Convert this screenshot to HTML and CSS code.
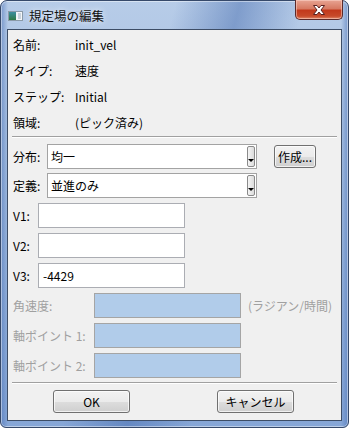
FILE: index.html
```html
<!DOCTYPE html>
<html lang="ja">
<head>
<meta charset="utf-8">
<title>規定場の編集</title>
<link rel="stylesheet" href="styles.css">
</head>
<body>
<div class="window">
  <div class="titlebar">
    <svg class="app-icon" width="15" height="10" viewBox="0 0 15 10">
      <defs>
        <linearGradient id="ig" x1="0" y1="0" x2="0" y2="1">
          <stop offset="0" stop-color="#3d8fa0"/>
          <stop offset="1" stop-color="#2f7a45"/>
        </linearGradient>
      </defs>
      <rect x="0.5" y="0.5" width="14" height="9" fill="#f4f6f8" stroke="#8a9aa8"/>
      <rect x="1" y="1" width="7" height="8" fill="url(#ig)"/>
      <rect x="10" y="2" width="3" height="6" fill="#c9d3dc"/>
    </svg>
    <span class="title">規定場の編集</span>
    <div class="close">
      <svg width="16" height="12" viewBox="0 0 16 12">
        <path d="M2.5 1.5 L6 1.5 L8 4 L10 1.5 L13.5 1.5 L10 6 L13.5 10.5 L10 10.5 L8 8 L6 10.5 L2.5 10.5 L6 6 Z" fill="#ffffff" stroke="#5a2020" stroke-width="1" stroke-linejoin="round"/>
      </svg>
    </div>
  </div>
  <div class="client">
    <div class="info">
      <div class="info-row"><span class="info-label">名前:</span><span>init_vel</span></div>
      <div class="info-row"><span class="info-label">タイプ:</span><span>速度</span></div>
      <div class="info-row"><span class="info-label">ステップ:</span><span>Initial</span></div>
      <div class="info-row"><span class="info-label">領域:</span><span>(ピック済み)</span></div>
    </div>
    <div class="sep"></div>
    <div class="form">
      <div class="row row-combo">
        <span class="lbl lbl-combo">分布:</span>
        <div class="combo"><span class="combo-text">均一</span><span class="combo-btn"><i class="tri"></i></span></div>
        <button class="btn btn-make">作成...</button>
      </div>
      <div class="row row-combo row-second">
        <span class="lbl lbl-combo">定義:</span>
        <div class="combo"><span class="combo-text">並進のみ</span><span class="combo-btn"><i class="tri"></i></span></div>
      </div>
      <div class="row">
        <span class="lbl lbl-v">V1:</span>
        <div class="field"></div>
      </div>
      <div class="row">
        <span class="lbl lbl-v">V2:</span>
        <div class="field"></div>
      </div>
      <div class="row">
        <span class="lbl lbl-v">V3:</span>
        <div class="field">-4429</div>
      </div>
      <div class="row disabled">
        <span class="lbl lbl-ang">角速度:</span>
        <div class="field field-dis"></div>
        <span class="unit">(ラジアン/時間)</span>
      </div>
      <div class="row disabled">
        <span class="lbl lbl-ang">軸ポイント 1:</span>
        <div class="field field-dis"></div>
      </div>
      <div class="row disabled">
        <span class="lbl lbl-ang">軸ポイント 2:</span>
        <div class="field field-dis"></div>
      </div>
    </div>
    <div class="sep sep-bottom"></div>
    <div class="buttons">
      <button class="btn btn-main">OK</button>
      <button class="btn btn-main">キャンセル</button>
    </div>
  </div>
</div>
</body>
</html>
```

FILE: styles.css
```css
html, body {
  margin: 0;
  padding: 0;
}
body {
  background: #ffffff;
  font-family: "Noto Sans CJK JP", "Noto Sans", sans-serif;
  font-size: 12px;
  color: #000;
}
.window {
  box-sizing: border-box;
  width: 349px;
  height: 428px;
  border: 1px solid #36496a;
  border-radius: 7px 7px 6px 6px;
  padding: 0 6px 6px 6px;
  display: flex;
  flex-direction: column;
  background:
    linear-gradient(105deg, rgba(255,255,255,0) 38%, rgba(60,100,170,0.45) 52%, rgba(255,255,255,0) 66%),
    linear-gradient(to right, rgba(70,110,180,0.55) 0px, rgba(70,110,180,0) 7px, rgba(70,110,180,0) 340px, rgba(70,110,180,0.55) 347px),
    linear-gradient(to bottom, #b7cce8 0%, #a3bde0 40%, #86a6d6 100%);
  box-shadow: inset 0 0 0 1px rgba(255,255,255,0.45);
}
.titlebar {
  height: 28px;
  display: flex;
  align-items: center;
  padding-left: 1px;
}
.app-icon {
  flex: none;
  margin-right: 6px;
  margin-top: 1px;
}
.title {
  font-size: 12.5px;
  color: #111;
  text-shadow: 0 0 6px rgba(255,255,255,0.9);
}
.close {
  margin-left: auto;
  margin-right: -1px;
  margin-top: -1px;
  align-self: flex-start;
  width: 46px;
  height: 19px;
  border: 1px solid #5b2a2a;
  border-top: none;
  border-radius: 0 0 5px 5px;
  background: linear-gradient(to bottom, #e8a493 0%, #d77a63 45%, #c2391c 55%, #c74a2a 85%, #e08a6c 100%);
  display: flex;
  align-items: center;
  justify-content: center;
  box-shadow: inset 0 0 0 1px rgba(255,220,210,0.5);
}
.client {
  flex: 1;
  background: #f0f0f0;
  border: 1px solid #3d4d66;
  display: flex;
  flex-direction: column;
  padding-top: 1px;
}
.info {
  display: flex;
  flex-direction: column;
  padding-left: 5px;
}
.info-row {
  height: 26px;
  display: flex;
  align-items: center;
}
.info-label {
  width: 62px;
  flex: none;
}
.sep {
  height: 1px;
  background: #a0a0a0;
  margin: 1px 4px 0 4px;
  border-bottom: 1px solid #ffffff;
}
.form {
  display: flex;
  flex-direction: column;
  gap: 5px;
  padding-left: 5px;
  margin-top: 6px;
}
.row {
  height: 25px;
  display: flex;
  align-items: center;
}
.row-second {
  margin-top: -1px;
}
.lbl {
  flex: none;
}
.lbl-combo { width: 34px; }
.lbl-v { width: 25px; }
.lbl-ang { width: 81px; }
.combo {
  box-sizing: border-box;
  width: 210px;
  height: 25px;
  border: 1px solid #a3a3a3;
  background: #fff;
  display: flex;
  align-items: stretch;
}
.combo-text {
  flex: 1;
  display: flex;
  align-items: center;
  padding-left: 3px;
}
.combo-btn {
  box-sizing: border-box;
  width: 8px;
  margin: 1px 1px 1px 0;
  border: 1px solid #8a8a8a;
  border-radius: 2px;
  background: linear-gradient(to right, #f4f4f4, #dcdcdc);
  display: flex;
  justify-content: center;
  align-items: flex-end;
  padding-bottom: 4px;
}
.tri {
  display: block;
  width: 0;
  height: 0;
  border-left: 3px solid transparent;
  border-right: 3px solid transparent;
  border-top: 3px solid #000;
}
.btn {
  font-family: inherit;
  font-size: 12px;
  color: #000;
  border: 1px solid #707070;
  border-radius: 3px;
  background: linear-gradient(to bottom, #f2f2f2 0%, #ebebeb 50%, #dddddd 51%, #cfcfcf 100%);
  box-shadow: inset 0 0 0 1px rgba(255,255,255,0.7);
  padding: 0;
  margin: 0;
  display: flex;
  align-items: center;
  justify-content: center;
}
.btn-make {
  width: 42px;
  height: 23px;
  margin-left: 17px;
}
.field {
  box-sizing: border-box;
  width: 147px;
  height: 25px;
  border: 1px solid #abadb3;
  background: #fff;
  display: flex;
  align-items: center;
  padding-left: 4px;
}
.disabled {
  color: #a0a0a0;
}
.field-dis {
  background: #b1ccea;
  border-color: #a5a5a5;
}
.unit {
  margin-left: 7px;
}
.sep-bottom {
  margin-top: 4px;
}
.buttons {
  display: flex;
  padding-left: 45px;
  gap: 87px;
  margin-top: 6px;
}
.btn-main {
  width: 77px;
  height: 23px;
}
```
